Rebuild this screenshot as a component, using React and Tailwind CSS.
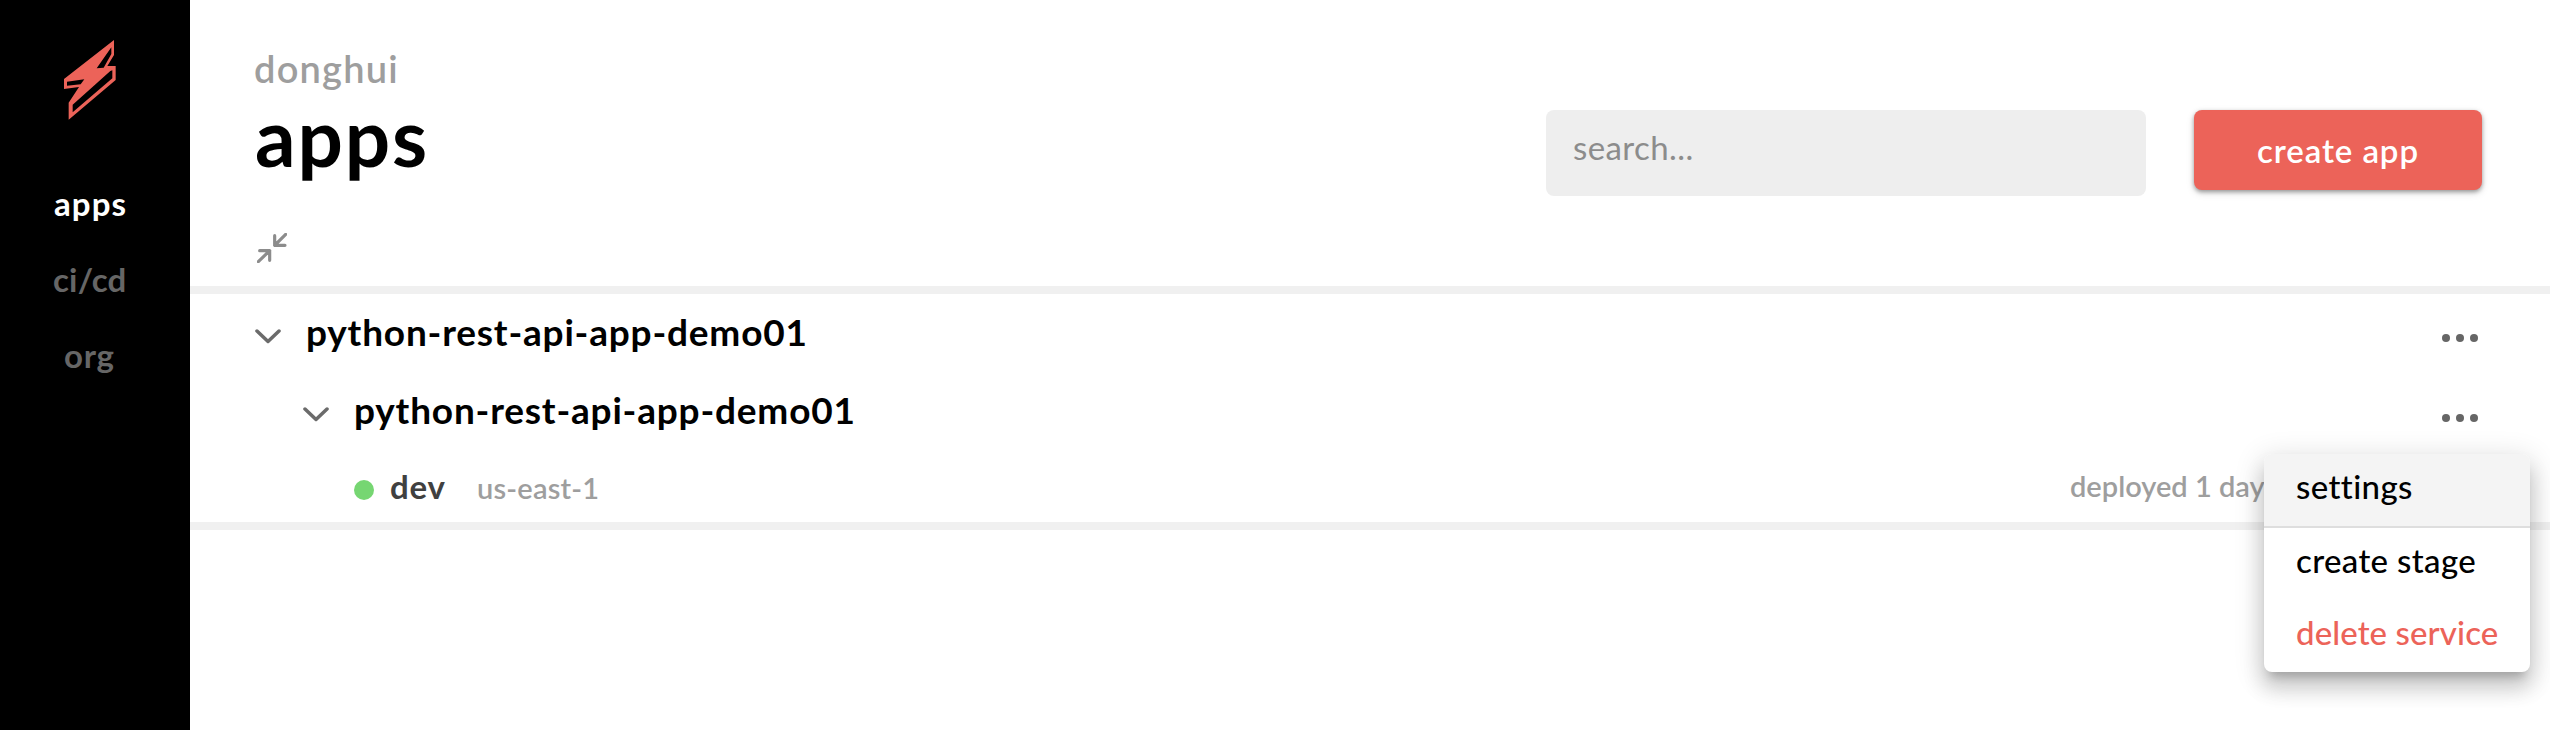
function Logo() {
  return (
    <svg className="ml-10 h-[120px] w-[100px]" viewBox="0 0 300 360" fill="#ec6359" fillRule="evenodd">
      <path d="M222 60V105L202 138H227V180L86 299V248L117 201L72 207V177ZM214 82L170 145L191 143L214 102ZM81 185V197L122 193L133 178ZM98 254V277L217 175V151L211 153Z" />
    </svg>
  );
}

function CollapseIcon() {
  return (
    <svg
      className="h-[30px] w-[30px]"
      viewBox="0 0 90 90"
      fill="none"
      stroke="#8c8c8c"
      strokeWidth="9.5"
      strokeLinecap="round"
      strokeLinejoin="round"
    >
      <path d="M86 4L53 37M53 8V37H84M4 86L38 53M8 53H38V82" />
    </svg>
  );
}

function Chevron() {
  return (
    <svg
      className="h-4 w-[26px]"
      viewBox="0 0 26 16"
      fill="none"
      stroke="#6b6b6b"
      strokeWidth="3.5"
      strokeLinecap="round"
      strokeLinejoin="round"
    >
      <path d="M2 3L13 13.5L24 3" />
    </svg>
  );
}

function Dots() {
  return (
    <div className="flex gap-1.5">
      <span className="size-2 rounded-full bg-[#666666]" />
      <span className="size-2 rounded-full bg-[#666666]" />
      <span className="size-2 rounded-full bg-[#666666]" />
    </div>
  );
}

function Sidebar() {
  return (
    <nav className="flex w-[190px] shrink-0 flex-col bg-black pt-5 text-[33px] leading-10 font-bold text-[#666666]">
      <Logo />
      <div className="flex flex-col gap-9 pt-[43px]">
        <a className="pl-[54px] tracking-[1.1px] text-white">apps</a>
        <a className="pl-[53px] tracking-[0.2px]">ci/cd</a>
        <a className="pl-16 tracking-[0.7px]">org</a>
      </div>
    </nav>
  );
}

function Header() {
  return (
    <header className="flex h-[286px] justify-between pr-[68px] pl-[63px]">
      <div className="pt-[46px]">
        <div className="pl-px text-[38px] leading-[44px] font-semibold tracking-[1.2px] text-[#9e9e9e]">donghui</div>
        <h1 className="mt-1.5 pl-0.5 text-[80px] leading-[80px] font-bold tracking-[1.8px]">apps</h1>
        <div className="mt-[57px] ml-1">
          <CollapseIcon />
        </div>
      </div>
      <div className="flex items-start gap-12 pt-[110px]">
        <div className="flex h-[86px] w-[600px] items-center rounded-lg bg-[#eeeeee] pb-3 pl-[27px] text-[33px] leading-10 tracking-[0.4px] text-[#8c8c8c]">
          search...
        </div>
        <button className="flex h-20 w-72 items-center justify-center rounded-lg bg-[#ec6359] pb-px text-[33px] leading-10 font-semibold tracking-[0.9px] text-white shadow-[0_2px_4px_rgba(0,0,0,0.35),0_3px_8px_rgba(0,0,0,0.12)]">
          create app
        </button>
      </div>
    </header>
  );
}

function Menu() {
  return (
    <div className="absolute top-[454px] right-5 w-[266px] overflow-hidden rounded-lg bg-white text-[33px] leading-10 font-medium shadow-[0_10px_10px_-6px_rgba(0,0,0,0.2),0_16px_20px_2px_rgba(0,0,0,0.14),0_6px_28px_4px_rgba(0,0,0,0.12)]">
      <div className="flex h-[74px] items-center border-b-2 border-[#dedede] bg-[#f4f4f4] pb-2 pl-8 tracking-[0.4px]">
        settings
      </div>
      <div className="flex h-[72px] items-center pb-[9px] pl-8 tracking-[0.35px]">create stage</div>
      <div className="flex h-[72px] items-center pb-[9px] pl-8 tracking-[0.1px] text-[#ec6359]">delete service</div>
    </div>
  );
}

export default function App() {
  return (
    <div className="flex h-[730px] w-[2550px] overflow-hidden bg-white font-[Lato,sans-serif] text-black">
      <Sidebar />
      <main className="relative flex-1">
        <Header />
        <section className="border-y-8 border-[#f0f0f0]">
          <div className="flex h-[76px] items-center pr-[72px] pl-[65px]">
            <div className="pt-2">
              <Chevron />
            </div>
            <div className="flex-1 pb-px pl-[25px] text-[37px] leading-10 font-bold tracking-[0.8px]">
              python-rest-api-app-demo01
            </div>
            <div className="pt-3">
              <Dots />
            </div>
          </div>
          <div className="flex h-20 items-center pr-[72px] pl-[113px]">
            <div className="pt-2">
              <Chevron />
            </div>
            <div className="flex-1 pb-px pl-[25px] text-[37px] leading-10 font-bold tracking-[0.8px]">
              python-rest-api-app-demo01
            </div>
            <div className="pt-4">
              <Dots />
            </div>
          </div>
          <div className="flex h-[72px] items-center pl-[164px] text-[29px] font-semibold text-[#9e9e9e]">
            <div className="pt-2">
              <div className="size-5 rounded-full bg-[#76d672]" />
            </div>
            <div className="w-[86px] pl-4 text-[33px] leading-10 font-bold tracking-[0.8px] text-[#404040]">dev</div>
            <div className="flex-1 pt-[3px] pl-[17px] leading-9 tracking-[0.2px]">us-east-1</div>
            <div className="w-[480px] leading-9">deployed 1 day</div>
          </div>
        </section>
        <Menu />
      </main>
    </div>
  );
}
